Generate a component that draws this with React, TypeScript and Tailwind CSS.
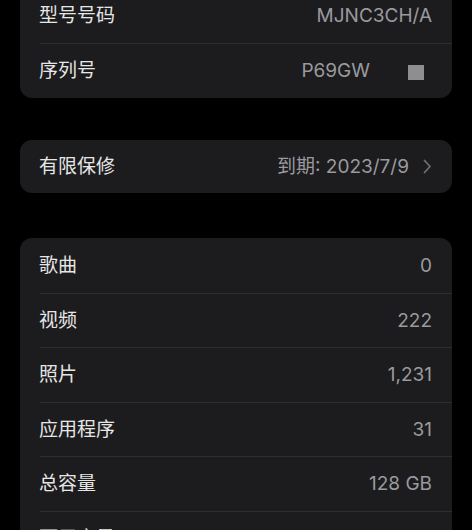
import React from "react";

type Row = { label: string; value: string };

const deviceRows: Row[] = [
    { label: "型号号码", value: "MJNC3CH/A" },
    { label: "序列号", value: "P69GW" },
];

const storageRows: Row[] = [
    { label: "歌曲", value: "0" },
    { label: "视频", value: "222" },
    { label: "照片", value: "1,231" },
    { label: "应用程序", value: "31" },
    { label: "总容量", value: "128 GB" },
    { label: "可用容量", value: "74.52 GB" },
];

function Chevron() {
    return (
        <svg width="9" height="15" viewBox="0 0 9 15" className="ml-[14px] text-[#6e6e73]">
            <path d="M1.5 1.5 L7 7.5 L1.5 13.5" fill="none" stroke="currentColor" strokeWidth="1.8" strokeLinecap="round" strokeLinejoin="round" />
        </svg>
    );
}

function ListRow({ row, first, extra }: { row: Row; first: boolean; extra?: React.ReactNode }) {
    return (
        <div className={first ? "" : "ml-[20px] border-t border-[#2e2e30]"}>
            <div
                className={
                    "flex items-center justify-between pr-[20px] " +
                    (first ? "h-[54.5px] pl-[19px]" : "h-[53.5px] -ml-[1px]")
                }
            >
                <span className="text-[#e6e6e6]">{row.label}</span>
                <span className="flex items-center text-[#9a9a9e]">
                    {row.value}
                    {extra}
                </span>
            </div>
        </div>
    );
}

export default function App() {
    return (
        <div
            className="h-[530px] w-[472px] overflow-hidden bg-black px-[20px] text-[19px] leading-none"
            style={{ fontFamily: 'Inter, "Noto Sans CJK SC", sans-serif' }}
        >
            <div className="-mt-[11.5px] rounded-[12px] bg-[#1c1c1e]">
                <ListRow row={deviceRows[0]} first />
                <ListRow
                    row={deviceRows[1]}
                    first={false}
                    extra={<span className="ml-[38px] mr-[8px] mt-[4px] h-[15px] w-[16px] bg-[#8e8e90]" />}
                />
            </div>

            <div className="mt-[42.5px] flex h-[53px] items-center justify-between rounded-[12px] bg-[#1c1c1e] pl-[19px] pr-[20px]">
                <span className="text-[#e6e6e6]">有限保修</span>
                <span className="flex items-center text-[#9a9a9e]">
                    到期: 2023/7/9
                    <Chevron />
                </span>
            </div>

            <div className="mt-[45px] rounded-[12px] bg-[#1c1c1e]">
                {storageRows.map((row, index) => (
                    <ListRow key={row.label} row={row} first={index === 0} />
                ))}
            </div>
        </div>
    );
}
